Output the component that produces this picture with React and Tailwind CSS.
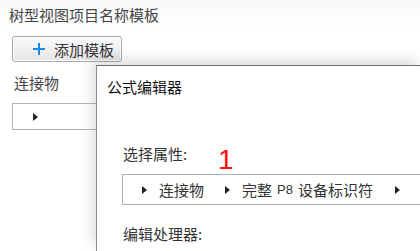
import React from 'react';

const FONT = { fontFamily: '"Noto Sans CJK SC", "Liberation Sans", sans-serif' };

function Tri({ className = '' }) {
  return (
    <svg width="5" height="8" viewBox="0 0 5 8" className={className}>
      <path d="M0 0 L5 4 L0 8 Z" fill="#222" />
    </svg>
  );
}

export default function App() {
  return (
    <div className="relative h-[251px] w-[420px] overflow-hidden bg-white text-[#333]" style={FONT}>
      {/* Background panel */}
      <div className="flex flex-col bg-gradient-to-b from-[#f9f9f9] to-white to-[30px]">
        <div className="ml-[9px] mt-[7px] text-[15px] leading-[15px] text-[#444]">树型视图项目名称模板</div>
        <button className="ml-[12px] mt-[14px] flex h-[26px] w-[110px] items-center rounded-[3px] border border-[#a9a9a9] bg-gradient-to-b from-[#fbfbfb] to-[#e4e4e4] shadow-[inset_0_0_0_1px_#ffffff]">
          <svg width="12" height="12" viewBox="0 0 12 12" className="ml-[20px]">
            <path d="M6 0 V12 M0 6 H12" stroke="#1e88e5" strokeWidth="2" />
          </svg>
          <span className="ml-[9px] text-[15px] leading-[15px] text-[#333]">添加模板</span>
        </button>
        <div className="ml-[14px] mt-[13px] text-[15px] leading-[15px] text-[#444]">连接物</div>
        <div className="ml-[12px] mt-[13px] flex h-[27px] w-[120px] items-center border border-[#b5b5b5] bg-white">
          <Tri className="ml-[20px]" />
        </div>
      </div>

      {/* Formula editor dialog */}
      <div className="absolute bottom-0 left-[96px] right-0 top-[65px] border-l border-t border-l-[#8a8a8a] border-t-[#6e6e6e] bg-white shadow-[-4px_-6px_12px_rgba(0,0,0,0.13)]">
        <div className="ml-[10px] mt-[13px] text-[15px] leading-[15px] text-[#111]">公式编辑器</div>
        <div className="ml-[26px] mt-[52px] text-[15px] leading-[15px] text-[#333]">选择属性:</div>
        <div className="ml-[25px] mt-[13px] flex h-[31px] w-[320px] items-center border border-[#b0b0b0] text-[15px] leading-[15px] text-[#333]">
          <Tri className="ml-[19px]" />
          <span className="ml-[12px]">连接物</span>
          <Tri className="ml-[21px]" />
          <span className="ml-[12px]">完整</span>
          <span className="ml-[5px] text-[13px]" style={{ fontFamily: '"Liberation Sans", sans-serif' }}>P8</span>
          <span className="ml-[5px]">设备标识符</span>
          <Tri className="ml-[22px]" />
        </div>
        <div className="ml-[26px] mt-[21px] text-[15px] leading-[15px] text-[#333]">编辑处理器:</div>
      </div>

      <span
        className="absolute left-[218px] top-[146px] text-[28px] leading-[28px] text-[#ff1010]"
        style={{ fontFamily: '"Liberation Sans", sans-serif' }}
      >
        1
      </span>
    </div>
  );
}
